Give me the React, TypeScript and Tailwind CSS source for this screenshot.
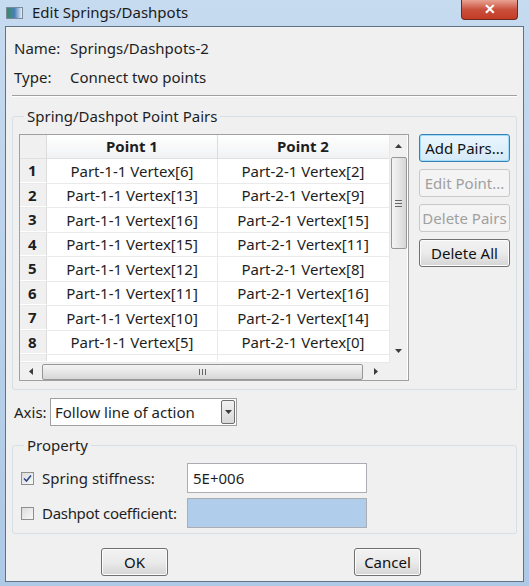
import React from "react";

const rows = [
  ["Part-1-1 Vertex[6]", "Part-2-1 Vertex[2]"],
  ["Part-1-1 Vertex[13]", "Part-2-1 Vertex[9]"],
  ["Part-1-1 Vertex[16]", "Part-2-1 Vertex[15]"],
  ["Part-1-1 Vertex[15]", "Part-2-1 Vertex[11]"],
  ["Part-1-1 Vertex[12]", "Part-2-1 Vertex[8]"],
  ["Part-1-1 Vertex[11]", "Part-2-1 Vertex[16]"],
  ["Part-1-1 Vertex[10]", "Part-2-1 Vertex[14]"],
  ["Part-1-1 Vertex[5]", "Part-2-1 Vertex[0]"],
];

function Arrow({ dir }: { dir: "up" | "down" | "left" | "right" }) {
  const pts = {
    up: "0,4 3.5,0 7,4",
    down: "0,0 7,0 3.5,4",
    left: "4,0 4,7 0,3.5",
    right: "0,0 4,3.5 0,7",
  }[dir];
  const vertical = dir === "up" || dir === "down";
  return (
    <svg width={vertical ? 7 : 4} height={vertical ? 4 : 7} viewBox={vertical ? "0 0 7 4" : "0 0 4 7"}>
      <polygon points={pts} fill="#3c3c3c" />
    </svg>
  );
}

function WinButton({ label, disabled, focused, className = "" }: { label: string; disabled?: boolean; focused?: boolean; className?: string }) {
  return (
    <div
      className={`h-[28px] flex items-center justify-center rounded-[3px] border text-[15px] ${
        disabled
          ? "border-[#c8c8c8] bg-[#f4f4f4] text-[#a0a0a0]"
          : focused
          ? "border-[#3c7fb1] bg-gradient-to-b from-[#eaf6fd] to-[#d4e9f7] text-[#111] shadow-[inset_0_0_0_1px_#9ddcfb]"
          : "border-[#707070] bg-gradient-to-b from-[#f2f2f2] via-[#ebebeb] to-[#d5d5d5] text-[#111] shadow-[inset_0_0_0_1px_#fcfcfc]"
      } ${className}`}
    >
      {label}
    </div>
  );
}

function GroupBox({ title, className = "", children }: { title: string; className?: string; children: React.ReactNode }) {
  return (
    <fieldset className={`border border-[#d5dfe5] rounded-[3px] px-[6px] ${className}`}>
      <legend className="ml-[5px] px-[3px] text-[15px] leading-[16px] text-[#1e1e1e]">{title}</legend>
      {children}
    </fieldset>
  );
}

function CheckBox({ checked }: { checked?: boolean }) {
  return (
    <div className="w-[13px] h-[13px] border border-[#8e8f8f] bg-gradient-to-br from-[#dcdcdc] to-[#f8f8f8] flex items-center justify-center">
      {checked && (
        <svg width="9" height="9" viewBox="0 0 9 9">
          <path d="M1 4.5 L3.5 7 L8 1.5" stroke="#2a4a8a" strokeWidth="1.6" fill="none" />
        </svg>
      )}
    </div>
  );
}

export default function App() {
  return (
    <div className="w-[529px] h-[586px] flex flex-col bg-gradient-to-b from-[#c6dbf0] via-[#b9d1ea] to-[#aec9e6] font-['Noto_Sans',sans-serif] text-[#1e1e1e] overflow-hidden">
      {/* title bar */}
      <div className="h-[26px] relative flex items-center pl-[6px]">
        <div className="w-[17px] h-[12px] mt-[-1px] border border-[#7a8a9a] bg-gradient-to-r from-[#3a8a5a] via-[#4a7fb8] to-[#e8eef4]" />
        <span className="ml-[9px] text-[15px] text-[#1a1a1a] mt-[-2px]">Edit Springs/Dashpots</span>
        <div className="absolute right-[11px] top-0 w-[57px] h-[20px] rounded-b-[4px] border border-t-0 border-[#6b2a22] bg-gradient-to-b from-[#e8a293] via-[#c9503c] to-[#c43a24] flex items-center justify-center">
          <span className="text-white text-[14px] font-bold leading-none mt-[-2px]">✕</span>
        </div>
      </div>

      {/* client area */}
      <div className="mx-[5px] mb-[4px] flex-1 border border-[#5f7387] bg-[#f0f0f0] px-[6px] flex flex-col">
        <div className="h-[32px] flex items-end text-[15px]">
          <span className="w-[58px] pl-[2px]">Name:</span>
          <span>Springs/Dashpots-2</span>
        </div>
        <div className="h-[29px] flex items-end text-[15px]">
          <span className="w-[58px] pl-[2px]">Type:</span>
          <span>Connect two points</span>
        </div>
        <div className="mt-[7px] h-px bg-[#a0a0a0] border-b border-white box-content" />

        <GroupBox title="Spring/Dashpot Point Pairs" className="mt-[11px] h-[282px] pb-[4px]">
          <div className="flex gap-[10px] mt-[10px]">
            {/* table */}
            <div className="w-[390px] h-[247px] border border-[#a0a0a0] bg-white flex flex-col">
              <div className="flex flex-1 min-h-0">
                <div className="w-[369px] overflow-hidden text-[15px]">
                  <div className="flex h-[24px] bg-gradient-to-b from-white to-[#f1f2f4] border-b border-[#e0e0e0] font-bold">
                    <div className="w-[27px] bg-[#f0f0f0] border-r border-[#dcdcdc]" />
                    <div className="w-[171px] flex items-center justify-center border-r border-[#dcdcdc]">Point 1</div>
                    <div className="w-[170px] flex items-center justify-center">Point 2</div>
                  </div>
                  {rows.map((r, i) => (
                    <div key={i} className="flex h-[24.5px] border-b border-[#eaeaea]">
                      <div className="w-[27px] bg-[#f0f0f0] border-r border-[#dcdcdc] border-b border-b-white font-bold pl-[8px] flex items-center">
                        {i + 1}
                      </div>
                      <div className="w-[171px] flex items-center justify-center border-r border-[#eaeaea]">{r[0]}</div>
                      <div className="w-[170px] flex items-center justify-center">{r[1]}</div>
                    </div>
                  ))}
                  <div className="flex h-[6px]">
                    <div className="w-[27px] bg-[#f0f0f0] border-r border-[#dcdcdc]" />
                    <div className="w-[171px] border-r border-[#eaeaea]" />
                  </div>
                </div>
                {/* vertical scrollbar */}
                <div className="w-[18px] bg-[#f0f0f0] border-l border-[#e8e8e8] flex flex-col items-center">
                  <div className="h-[22px] flex items-center justify-center">
                    <Arrow dir="up" />
                  </div>
                  <div className="w-[16px] h-[92px] rounded-[2px] border border-[#979797] bg-gradient-to-r from-[#f4f4f4] via-[#e6e6e6] to-[#d6d6d6] flex flex-col items-center justify-center gap-[2px]">
                    <div className="w-[7px] h-px bg-[#666]" />
                    <div className="w-[7px] h-px bg-[#666]" />
                    <div className="w-[7px] h-px bg-[#666]" />
                  </div>
                  <div className="flex-1" />
                  <div className="h-[22px] flex items-center justify-center">
                    <Arrow dir="down" />
                  </div>
                </div>
              </div>
              {/* horizontal scrollbar */}
              <div className="h-[18px] flex">
                <div className="w-[369px] bg-[#f0f0f0] border-t border-[#e8e8e8] flex items-center">
                  <div className="w-[22px] flex justify-center">
                    <Arrow dir="left" />
                  </div>
                  <div className="w-[321px] h-[16px] rounded-[2px] border border-[#979797] bg-gradient-to-b from-[#f4f4f4] via-[#e6e6e6] to-[#d6d6d6] flex items-center justify-center gap-[2px]">
                    <div className="w-px h-[6px] bg-[#666]" />
                    <div className="w-px h-[6px] bg-[#666]" />
                    <div className="w-px h-[6px] bg-[#666]" />
                  </div>
                  <div className="flex-1 flex justify-center">
                    <Arrow dir="right" />
                  </div>
                </div>
                <div className="w-[18px] bg-[#f0f0f0]" />
              </div>
            </div>

            {/* side buttons */}
            <div className="w-[91px] flex flex-col gap-[7px]">
              <WinButton label="Add Pairs..." focused />
              <WinButton label="Edit Point..." disabled />
              <WinButton label="Delete Pairs" disabled />
              <WinButton label="Delete All" />
            </div>
          </div>
        </GroupBox>

        {/* axis */}
        <div className="mt-[8px] flex items-center text-[15px]">
          <span className="w-[38px] pl-[2px]">Axis:</span>
          <div className="w-[187px] h-[28px] border border-[#a0a0a0] bg-white flex items-center pl-[4px]">
            <span className="flex-1">Follow line of action</span>
            <div className="w-[14px] h-[24px] mr-[1px] border border-[#707070] rounded-[2px] bg-gradient-to-b from-[#f2f2f2] to-[#d8d8d8] flex items-center justify-center">
              <Arrow dir="down" />
            </div>
          </div>
        </div>

        <GroupBox title="Property" className="mt-[11px] h-[97px] pb-[4px]">
          <div className="flex flex-col gap-[5px] mt-[10px] text-[15px]">
            <div className="flex items-center">
              <div className="w-[168px] flex items-center gap-[8px] pl-[2px]">
                <CheckBox checked />
                <span>Spring stiffness:</span>
              </div>
              <div className="w-[180px] h-[30px] border border-[#abadb3] bg-white flex items-center pl-[5px]">5E+006</div>
            </div>
            <div className="flex items-center">
              <div className="w-[168px] flex items-center gap-[8px] pl-[2px]">
                <CheckBox />
                <span className="tracking-[-0.3px] whitespace-nowrap">Dashpot coefficient:</span>
              </div>
              <div className="w-[180px] h-[30px] border border-[#abadb3] bg-[#b1cdec]" />
            </div>
          </div>
        </GroupBox>

        <div className="mt-[14px] flex">
          <WinButton label="OK" className="ml-[89px] w-[67px]" />
          <WinButton label="Cancel" className="ml-[186px] w-[67px]" />
        </div>
      </div>
    </div>
  );
}
